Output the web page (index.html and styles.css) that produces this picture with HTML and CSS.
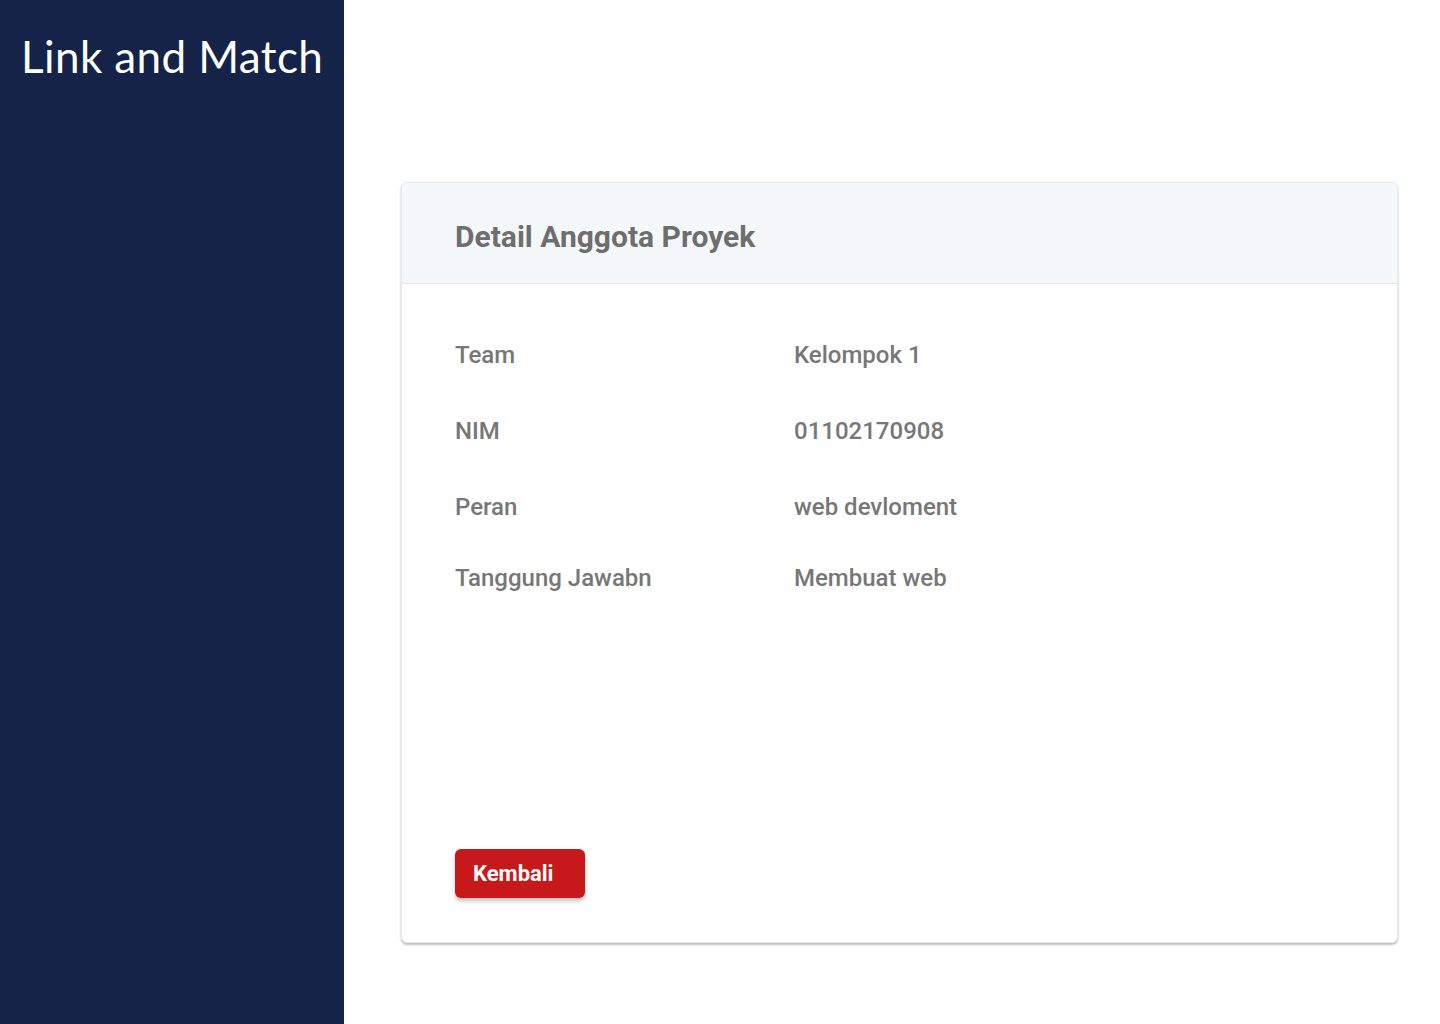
FILE: index.html
```html
<!DOCTYPE html>
<html lang="id">
<head>
<meta charset="utf-8">
<title>Detail Anggota Proyek</title>
<link rel="stylesheet" href="styles.css">
</head>
<body>
<div class="layout">
  <aside class="sidebar">
    <div class="brand">Link and Match</div>
  </aside>
  <main class="main">
    <section class="card">
      <header class="card-header">
        <h1 class="card-title">Detail Anggota Proyek</h1>
      </header>
      <div class="card-body">
        <div class="details">
          <div class="row"><div class="label">Team</div><div class="value">Kelompok 1</div></div>
          <div class="row"><div class="label">NIM</div><div class="value">01102170908</div></div>
          <div class="row"><div class="label">Peran</div><div class="value">web devloment</div></div>
          <div class="row row-last"><div class="label">Tanggung Jawabn</div><div class="value">Membuat web</div></div>
        </div>
        <div class="actions">
          <button class="btn-back" type="button">Kembali</button>
        </div>
      </div>
    </section>
  </main>
</div>
</body>
</html>
```

FILE: styles.css
```css
* { box-sizing: border-box; }
html, body { margin: 0; padding: 0; }
body {
  font-family: Roboto, "Liberation Sans", sans-serif;
  background: #ffffff;
}
.layout {
  display: flex;
  min-height: 1024px;
}
.sidebar {
  width: 344px;
  flex: 0 0 344px;
  background: #152349;
  padding: 30px 0 0 21px;
}
.brand {
  font-family: Lato, "Open Sans", sans-serif;
  font-weight: 400;
  font-size: 44px;
  line-height: 52px;
  color: #ffffff;
  letter-spacing: 0.4px;
}
.main {
  flex: 1;
  padding: 182px 42px 0 57px;
}
.card {
  background: #ffffff;
  border: 1px solid #e6e8ea;
  border-radius: 6px;
  box-shadow: 0 2px 2px rgba(0,0,0,0.22), 0 1px 4px rgba(0,0,0,0.06);
  height: 761px;
  display: flex;
  flex-direction: column;
  overflow: hidden;
}
.card-header {
  background: #f5f8fb;
  border-bottom: 1px solid #e4e6e8;
  height: 101px;
  display: flex;
  align-items: center;
  padding: 7px 0 0 53px;
}
.card-title {
  margin: 0;
  font-size: 30px;
  line-height: 36px;
  font-weight: 700;
  color: #6e6e6e;
}
.card-body {
  flex: 1;
  display: flex;
  flex-direction: column;
  padding: 57px 53px 44px;
}
.details {
  display: flex;
  flex-direction: column;
  gap: 48px;
}
.row {
  display: flex;
  font-size: 24px;
  line-height: 28px;
  font-weight: 500;
  color: #777777;
}
.row-last { margin-top: -5px; }
.label { width: 339px; }
.actions {
  margin-top: auto;
}
.btn-back {
  width: 130px;
  height: 49px;
  background: #c8191a;
  color: #ffffff;
  border: none;
  border-radius: 6px;
  font-family: Roboto, "Liberation Sans", sans-serif;
  font-size: 22px;
  font-weight: 700;
  text-align: left;
  padding: 0 0 0 18px;
  box-shadow: 0 3px 4px rgba(0,0,0,0.25);
}
```
